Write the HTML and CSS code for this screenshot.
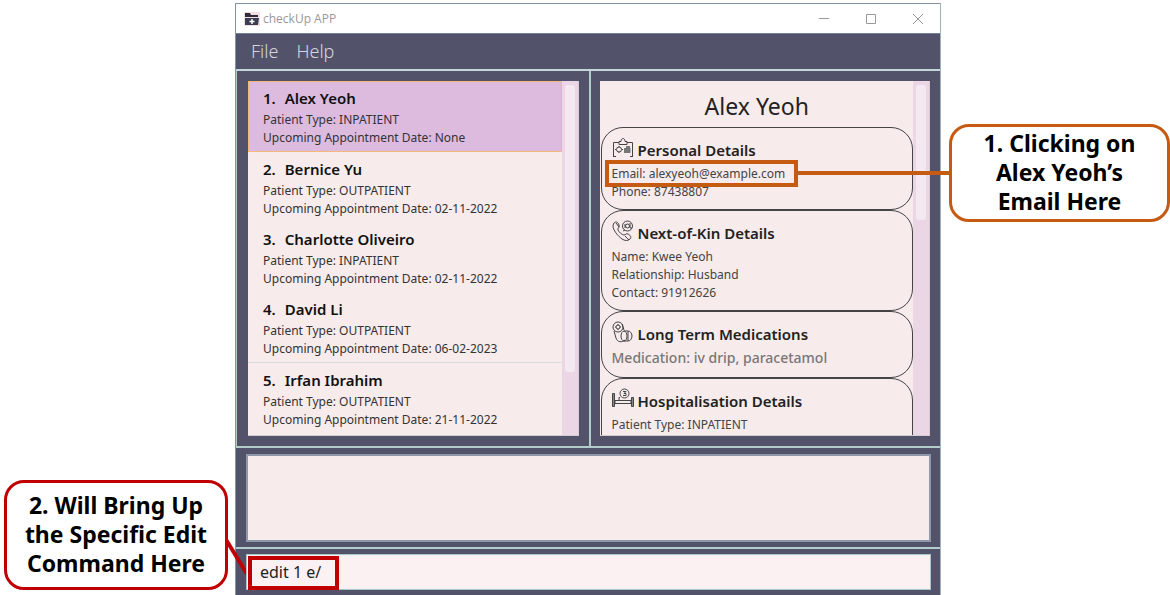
FILE: index.html
```html
<!DOCTYPE html>
<html lang="en">
<head>
<meta charset="utf-8">
<title>checkUp APP</title>
<link rel="stylesheet" href="styles.css">
</head>
<body>
<div class="stage">
  <aside class="side side-left">
    <div class="callout callout-red">
      <p>2. Will Bring Up the Specific Edit Command Here</p>
      <svg class="lead-red" viewBox="0 0 24 44" aria-hidden="true"><path d="M0 3 22 39" stroke="#c00000" stroke-width="4"/></svg>
    </div>
  </aside>

  <div class="window">
    <header class="titlebar">
      <svg class="app-icon" viewBox="0 0 16 14" aria-hidden="true"><path fill="#f3dfe2" d="M0 0h16v14H0z"/><path fill="#2b2b3c" d="M1 1h5l1 2h7v2H1z"/><path fill="#3c3d52" d="M1 6h14l-1 7H1z"/><path d="M8 7v5M5.500 9.500h5" stroke="#fff" stroke-width="1.500"/></svg>
      <span class="app-name">checkUp APP</span>
      <div class="win-buttons">
        <button type="button" aria-label="Minimize"><svg viewBox="0 0 12 12"><path d="M1 5.500h10"/></svg></button>
        <button type="button" aria-label="Maximize"><svg viewBox="0 0 12 12"><path d="M1.500 1.500h9v9h-9z"/></svg></button>
        <button type="button" aria-label="Close"><svg viewBox="0 0 12 12"><path d="m1 1 10 10M11 1 1 11"/></svg></button>
      </div>
    </header>
    <nav class="menubar">
      <button type="button">File</button>
      <button type="button">Help</button>
    </nav>

    <main class="split">
      <section class="pane">
        <div class="view">
          <ol class="patients">
            <li class="patient selected"><h2><span>1.</span>Alex Yeoh</h2><p>Patient Type: INPATIENT</p><p>Upcoming Appointment Date: None</p></li>
            <li class="patient"><h2><span>2.</span>Bernice Yu</h2><p>Patient Type: OUTPATIENT</p><p>Upcoming Appointment Date: 02-11-2022</p></li>
            <li class="patient"><h2><span>3.</span>Charlotte Oliveiro</h2><p>Patient Type: INPATIENT</p><p>Upcoming Appointment Date: 02-11-2022</p></li>
            <li class="patient"><h2><span>4.</span>David Li</h2><p>Patient Type: OUTPATIENT</p><p>Upcoming Appointment Date: 06-02-2023</p></li>
            <li class="patient divided"><h2><span>5.</span>Irfan Ibrahim</h2><p>Patient Type: OUTPATIENT</p><p>Upcoming Appointment Date: 21-11-2022</p></li>
          </ol>
          <div class="track"><div class="thumb thumb-list"></div></div>
        </div>
      </section>

      <section class="pane">
        <div class="view">
          <div class="details">
            <h1>Alex Yeoh</h1>
            <article class="card">
              <h2><svg class="icon" viewBox="0 0 22 22"><path d="M7 5.500H1.500V19M15 5.500h5.500V19M1 19.500h3M18 19.500h3M7 7.500h8v-3h-2c0-4-4-4-4 0H7z"/><circle cx="7" cy="12.500" r="2.500"/><path d="M7 9v1M7 15v1M3 12.500h1M10 12.500h1"/><path fill="#777" stroke="none" d="M12 11h6.500v5H12zM14 9h4v2h-4z"/></svg>Personal Details</h2>
              <button type="button" class="email">Email: alexyeoh@example.com</button>
              <p>Phone: 87438807</p>
            </article>
            <article class="card">
              <h2><svg class="icon" viewBox="0 0 22 22"><path d="M2 3c2-2 4-1 5 2s-2 3-1 5 4 5 6 5 2-2 4-1 4 3 2 5-5 2-8 0S-2 8 2 3zM4 3l3 4M13 16l4 4"/><circle cx="15.500" cy="6" r="5"/><circle cx="15.500" cy="6" r="2"/><path d="M13 4v4M18 3v5h2M11 11l2-1"/></svg>Next-of-Kin Details</h2>
              <p>Name: Kwee Yeoh</p>
              <p>Relationship: Husband</p>
              <p>Contact: 91912626</p>
            </article>
            <article class="card card-meds">
              <h2><svg class="icon" viewBox="0 0 22 22"><circle cx="6" cy="6" r="5"/><circle cx="6" cy="6" r="2"/><path d="M6 3v1M6 8v1M3 6h1M8 6h1M2 10l2 7c1 4 6 5 9 2M10 3l2 6"/><ellipse cx="12" cy="15" rx="3" ry="5"/><path d="M12 10h4c2 0 4 2 4 5s-2 5-4 5h-4M16 10v10"/></svg>Long Term Medications</h2>
              <p>Medication: iv drip, paracetamol</p>
            </article>
            <article class="card card-last">
              <h2><svg class="icon" viewBox="0 0 22 22"><path fill="#888" d="M.5 5.500h2v13h-2zM19.500 9.500h2v9h-2z"/><path d="M3 12.500h16v3H3zM8 9.500h-1v3"/><circle cx="12.500" cy="5.500" r="4.500"/><path d="M11 3.500h3l-2 2h2v2h-3"/></svg>Hospitalisation Details</h2>
              <p>Patient Type: INPATIENT</p>
            </article>
          </div>
          <div class="track"><div class="thumb thumb-details"></div></div>
        </div>
      </section>
    </main>

    <section class="result-row"><textarea class="result" aria-label="Result" readonly></textarea></section>
    <section class="command-row"><input class="command" type="text" aria-label="Command" value="edit 1 e/"><span class="mark-red"></span></section>
  </div>

  <aside class="side side-right">
    <div class="callout callout-orange">
      <p>1. Clicking on Alex Yeoh’s Email Here</p>
      <span class="lead-orange"></span>
    </div>
  </aside>
</div>
</body>
</html>
```
FILE: styles.css
```css
* { box-sizing: border-box; }
body { margin: 0; background: #fff; font-family: "Noto Sans", "Open Sans", sans-serif; color: #333; }
h1, h2, p, ol { margin: 0; padding: 0; }
button { font: inherit; color: inherit; background: none; border: 0; padding: 0; text-align: left; }

.stage { display: grid; grid-template-columns: 235fr 706fr 229fr; grid-template-rows: minmax(0, 1fr); height: 100vh; min-height: 480px; }

.window { display: flex; flex-direction: column; min-width: 0; margin-top: 3px; background: #52536a; border: 1px solid #8294a8; border-right-color: #9db5b8; border-bottom: 0; }
.titlebar { display: flex; align-items: center; flex: 0 0 30px; padding: 0 16px 0 8px; background: #fff; border-bottom: 1px solid #75809a; }
.app-icon { width: 16px; height: 14px; margin-right: 3px; }
.app-name { flex: 1; font-family: "Open Sans", sans-serif; font-size: 12px; color: #999; }
.win-buttons { display: flex; gap: 35px; }
.win-buttons button { display: flex; }
.win-buttons svg { width: 12px; height: 12px; fill: none; stroke: #999; }
.menubar { display: flex; flex: 0 0 35px; align-items: center; gap: 18px; padding: 0 15px 2px; font-size: 18px; font-weight: 300; color: #d5d5dc; }

.split { display: grid; grid-template-columns: 1fr 1fr; grid-template-rows: minmax(0, 1fr); flex: 1; min-height: 0; border-top: 2px solid #c4d6d8; border-left: 1px solid #b5cccd; }
.pane { display: flex; min-width: 0; min-height: 0; padding: 10px; }
.pane:first-child { padding-left: 11px; }
.pane + .pane { padding-left: 9px; border-left: 2px solid #b5cccd; }
.view { display: flex; flex: 1; min-width: 0; overflow: hidden; background: #f7ebeb; border: 1px solid #d5cbd3; border-width: 0 1px 1px 0; }
.track { flex: 0 0 16px; padding: 4px 3px; background: #ead6e5; }
.thumb { border-radius: 3px; background: #f4e9f1; }
.thumb-list { height: 83%; }
.thumb-details { height: 39%; }

.patients { flex: 1; list-style: none; }
.patient { padding: 7px 15px 4px; font-size: 12px; line-height: 18px; }
.patient h2 { display: flex; gap: 9px; margin-bottom: 3px; font-size: 15px; font-weight: 600; line-height: 20px; color: #111; }
.selected { background: #dcbbdf; border: 1px solid #f5b878; padding: 6px 14px 4px; }
.divided { border-top: 1px solid #d8dcdd; }

.details { flex: 1; min-width: 0; padding-left: 1px; }
.details h1 { height: 46px; font-size: 23px; font-weight: 400; line-height: 50px; text-align: center; color: #222; }
.card { padding: 10px 10px 8px; border: 1px solid #444; border-radius: 22px; font-size: 12px; line-height: 18px; color: #444; }
.card h2 { display: flex; align-items: center; gap: 4px; margin-bottom: 3px; font-size: 15px; font-weight: 600; line-height: 24px; color: #222; }
.icon { width: 22px; height: 22px; margin-top: -4px; fill: none; stroke: #444; }
.email { position: relative; display: block; line-height: 18px; }
.email::after { content: ""; position: absolute; inset: -5px -13px -4px -7px; border: 4px solid #c55a11; }
.card-meds { padding: 10px; font-size: 14px; font-weight: 500; color: #777; }
.card-last { min-height: 100px; }

.result-row { display: flex; flex: 0 0 101px; padding: 6px 9px 5px 10px; border-top: 2px solid #b5cccd; }
.result { flex: 1; min-width: 0; resize: none; border: 2px solid #8e98a8; background: #f7ebeb; }
.command-row { position: relative; display: flex; flex: 0 0 48px; padding: 5px 9px 5px 10px; border-top: 2px solid #b5cccd; }
.command { flex: 1; min-width: 0; padding: 0 13px; border: 1px solid #a9c5c5; background: #fbf1f2; font-family: inherit; font-size: 16px; color: #222; }
.mark-red { position: absolute; left: 12px; top: 7px; width: 91px; height: 34px; border: 4px solid #c00000; }

.side { display: flex; flex-direction: column; }
.side-left { justify-content: flex-end; padding: 0 7px 5px 4px; }
.side-right { padding: 124px 0 0 8px; }
.callout { position: relative; border: 3px solid; border-radius: 20px; background: #fff; font-size: 23px; font-weight: 700; line-height: 29px; text-align: center; }
.callout p { color: #000; }
.callout-red { border-color: #c00000; padding: 8px 12px 9px; }
.callout-orange { border-color: #c55a11; padding: 2px 24px 3px; }
.lead-red { position: absolute; left: 100%; top: 50%; width: 24px; height: 44px; }
.lead-orange { position: absolute; right: 100%; top: 50%; width: 155px; height: 4px; margin-top: -2px; background: #c55a11; }
```
